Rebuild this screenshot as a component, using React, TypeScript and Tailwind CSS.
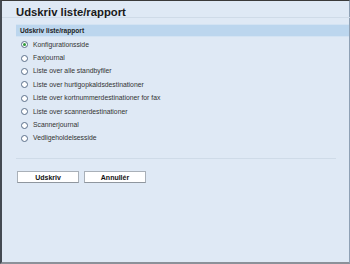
const items = [
  'Konfigurationsside',
  'Faxjournal',
  'Liste over alle standbyfiler',
  'Liste over hurtigopkaldsdestinationer',
  'Liste over kortnummerdestinationer for fax',
  'Liste over scannerdestinationer',
  'Scannerjournal',
  'Vedligeholdelsesside',
];

function Radio({ checked }: { checked: boolean }) {
  return (
    <span className="w-[7px] h-[7px] rounded-full border border-[#5a6f8a] bg-white flex items-center justify-center shrink-0">
      {checked && <span className="w-[3px] h-[3px] rounded-full bg-[#2e9a3a]" />}
    </span>
  );
}

export default function App() {
  return (
    <div
      className="w-[350px] h-[264px] bg-[#dfe9f5] border-t border-t-[#3a3a3a] border-l-2 border-l-[#444a52] border-r border-r-[#8fa1b5] border-b-2 border-b-[#8b9199] flex flex-col"
      style={{ fontFamily: '"Liberation Sans", Arial, sans-serif' }}
    >
      <div className="pl-[14px] pt-[6px] pr-[13px]">
        <h1 className="text-[11.3px] leading-[11px] font-bold text-[#1a1a1a] h-[10px]">Udskriv liste/rapport</h1>
        <div className="h-[1px] bg-[#cfdbe8] -mx-[14px]" />
        <div className="mt-[6px] h-[13px] bg-[#bcd6ee] border-y border-[#d3e3f3] flex items-center pl-[4px] -mr-[13px]">
          <span className="text-[6.6px] font-bold text-[#1e1e1e]">Udskriv liste/rapport</span>
        </div>
        <div className="flex flex-col pt-[1px]">
          {items.map((item, i) => (
            <div key={item} className="h-[13.4px] flex items-center gap-[5px] pl-[5px]">
              <Radio checked={i === 0} />
              <span className="text-[6.8px] text-[#333333]">{item}</span>
            </div>
          ))}
        </div>
        <div className="mt-[13px] h-[1px] bg-[#cfdbe8]" />
        <div className="mt-[12px] flex gap-[5px] pl-[1px]">
          <button className="w-[62px] h-[12px] bg-white border border-[#a9b0b8] border-b-[#8f969e] text-[7px] font-bold text-[#111] leading-none">
            Udskriv
          </button>
          <button className="w-[62px] h-[12px] bg-white border border-[#a9b0b8] border-b-[#8f969e] text-[7px] font-bold text-[#111] leading-none">
            Annullér
          </button>
        </div>
      </div>
    </div>
  );
}
